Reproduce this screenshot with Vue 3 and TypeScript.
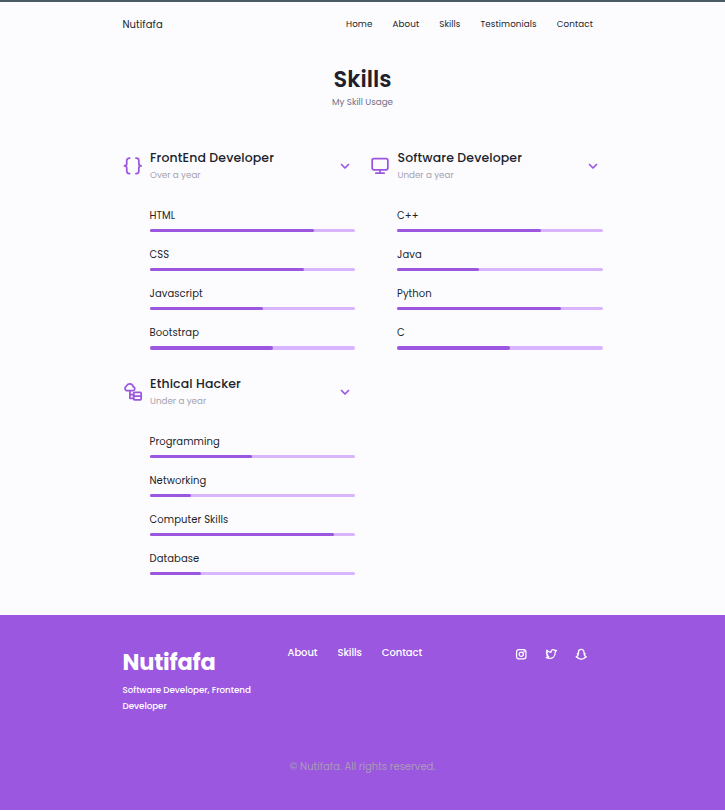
<script setup lang="ts">
interface Skill {
  name: string
  level: number
}
interface Group {
  title: string
  period: string
  icon: 'braces' | 'desktop' | 'database'
  skills: Skill[]
}

const nav = ['Home', 'About', 'Skills', 'Testimonials', 'Contact']
const footerNav = ['About', 'Skills', 'Contact']

const groups: Group[] = [
  {
    title: 'FrontEnd Developer',
    period: 'Over a year',
    icon: 'braces',
    skills: [
      { name: 'HTML', level: 80 },
      { name: 'CSS', level: 75 },
      { name: 'Javascript', level: 55 },
      { name: 'Bootstrap', level: 60 },
    ],
  },
  {
    title: 'Software Developer',
    period: 'Under a year',
    icon: 'desktop',
    skills: [
      { name: 'C++', level: 70 },
      { name: 'Java', level: 40 },
      { name: 'Python', level: 80 },
      { name: 'C', level: 55 },
    ],
  },
  {
    title: 'Ethical Hacker',
    period: 'Under a year',
    icon: 'database',
    skills: [
      { name: 'Programming', level: 50 },
      { name: 'Networking', level: 20 },
      { name: 'Computer Skills', level: 90 },
      { name: 'Database', level: 25 },
    ],
  },
]
</script>

<template>
  <div class="page">
    <header class="header">
      <a class="brand">Nutifafa</a>
      <nav class="nav">
        <a v-for="item in nav" :key="item">{{ item }}</a>
      </nav>
    </header>

    <main class="main">
      <h1 class="title">Skills</h1>
      <p class="subtitle">My Skill Usage</p>

      <div class="groups">
        <section v-for="g in groups" :key="g.title" class="group">
          <div class="group-head">
            <svg class="icon" viewBox="0 0 24 24">
              <template v-if="g.icon === 'braces'">
                <path d="M8 2.500H7.500a3 3 0 0 0-3 3v3.500a2.800 2.800 0 0 1-2.800 2.800a2.800 2.800 0 0 1 2.800 2.800V18a3 3 0 0 0 3 3h.5" />
                <path d="M15.500 2.500h.5a3 3 0 0 1 3 3v3.500a2.800 2.800 0 0 0 2.800 2.800a2.800 2.800 0 0 0-2.800 2.800V18a3 3 0 0 1-3 3h-.5" />
              </template>
              <template v-else-if="g.icon === 'desktop'">
                <rect x="2.600" y="3" width="18.800" height="13.500" rx="2" />
                <path d="M12 16.500v4M7 20.500h10" />
              </template>
              <template v-else>
                <path d="M4.200 10.400a2.900 2.900 0 0 1-.2-5.300a4.400 4.400 0 0 1 8.300.5a2.500 2.500 0 0 1 .1 4.800zM8.300 10.400V19.500h4.500M8.300 15h4.500" />
                <rect x="12.800" y="12.500" width="9" height="9" rx="1" />
                <path d="M12.800 17H21.800" />
              </template>
            </svg>
            <div class="group-text">
              <h2>{{ g.title }}</h2>
              <span>{{ g.period }}</span>
            </div>
            <svg class="arrow" viewBox="0 0 24 24">
              <path d="M7.800 10.200l4.200 4.200l4.200-4.200" />
            </svg>
          </div>
          <ul class="skills">
            <li v-for="s in g.skills" :key="s.name">
              <span class="name">{{ s.name }}</span>
              <div class="bar"><div class="fill" :style="{ width: s.level + '%' }"></div></div>
            </li>
          </ul>
        </section>
      </div>
    </main>

    <footer class="footer">
      <div class="footer-grid">
        <div>
          <h2 class="footer-title">Nutifafa</h2>
          <p class="footer-sub">Software Developer, Frontend<br />Developer</p>
        </div>
        <nav class="footer-nav">
          <a v-for="item in footerNav" :key="item">{{ item }}</a>
        </nav>
        <div class="socials">
          <svg viewBox="0 0 24 24">
            <rect x="3" y="3" width="18" height="18" rx="4.500" />
            <circle cx="12" cy="12" r="4.100" />
            <circle cx="17.300" cy="6.700" r=".5" />
          </svg>
          <svg viewBox="0 0 24 24">
            <path d="M22 4.500l-2.400 3.500C19.600 15.500 15 20 9 20c-2.700 0-5-.6-6.600-1.800c2 0 3.600-.5 4.600-1.500c-2-.6-3-1.700-3.400-3.200h1.700C3.500 12.200 2.700 10.700 2.800 8.800l1.700.5C2.900 7.600 2.800 5.600 3.600 4C6 6.500 8.500 7.900 11.500 8.200C11.300 5.200 13.200 3.300 15.500 3.300c1.200 0 2.200.4 3 1.200z" />
          </svg>
          <svg viewBox="0 0 24 24">
            <path d="M12 2.500c-3.200 0-5.300 2.200-5.300 5.200v3l-2.200.3l1.700 1.900c-.6 2-2 3.200-4 3.900c.7 1.500 2 1.400 3.500 1.700l.6 1.300c2-.4 3.200 1.700 5.700 1.700s3.700-2.100 5.700-1.700l.6-1.300c1.500-.3 2.800-.2 3.500-1.700c-2-.7-3.400-1.900-4-3.900l1.700-1.900l-2.200-.3v-3c0-3-2.100-5.200-5.300-5.200z" />
          </svg>
        </div>
      </div>
      <p class="copy">© Nutifafa. All rights reserved.</p>
    </footer>
  </div>
</template>

<style>
body {
  background: #fff;
}
</style>

<style scoped>
* {
  box-sizing: border-box;
  margin: 0;
  padding: 0;
}
.page {
  height: 810px;
  display: flex;
  flex-direction: column;
  background: #fcfcff;
  border-top: 2px solid #4b5c66;
  color: #211f2b;
  font-family: Poppins, "Open Sans", sans-serif;
}
.header {
  width: 480px;
  height: 44px;
  margin: 0 auto;
  display: flex;
  align-items: center;
  justify-content: space-between;
  padding-right: 9.500px;
}
.brand {
  font-size: 10px;
  letter-spacing: 0.080px;
  padding-top: 1px;
}
.nav {
  display: flex;
  gap: 20px;
  font-size: 8.750px;
  letter-spacing: 0.100px;
}
.main {
  width: 480px;
  height: 569px;
  margin: 0 auto;
  padding-top: 16px;
}
.title {
  height: 34px;
  line-height: 34px;
  font-size: 22.500px;
  font-weight: 600;
  text-align: center;
}
.subtitle {
  height: 14px;
  line-height: 12px;
  font-size: 8.750px;
  text-align: center;
  color: #736e85;
}
.groups {
  display: grid;
  grid-template-columns: 232.500px 232.500px;
  column-gap: 15px;
  padding-top: 39px;
}
.group {
  height: 226px;
}
.group-head {
  height: 34px;
  display: flex;
  align-items: center;
}
.icon,
.arrow {
  width: 20px;
  height: 20px;
  flex: none;
  fill: none;
  stroke: #9b57df;
  stroke-width: 2.100;
  stroke-linecap: round;
  stroke-linejoin: round;
}
.group-text {
  flex: 1;
  padding-left: 7.500px;
}
.group-text h2 {
  height: 18px;
  line-height: 18px;
  font-size: 12.500px;
  font-weight: 500;
  letter-spacing: 0.110px;
}
.group-text span {
  display: block;
  height: 16px;
  line-height: 16px;
  font-size: 8.750px;
  color: #a4a1ae;
}
.skills {
  list-style: none;
  padding: 24px 0 0 27px;
}
.skills li {
  height: 39px;
}
.name {
  display: block;
  height: 22px;
  line-height: 16px;
  padding-top: 1px;
  font-size: 10px;
  letter-spacing: 0.090px;
}
.bar {
  height: 3px;
  border-radius: 2px;
  background: #d8b5fc;
}
.group:not(:last-child) li:last-child .bar {
  height: 4px;
}
.fill {
  height: 100%;
  border-radius: 2px;
  background: #9b57df;
}
.footer {
  height: 195px;
  background: #9b57df;
  color: #fff;
}
.footer-grid {
  width: 480px;
  height: 142px;
  margin: 0 auto;
  padding-top: 30px;
  display: grid;
  grid-template-columns: 150px 150px 150px;
  column-gap: 15px;
}
.footer-title {
  height: 37px;
  line-height: 34px;
  font-size: 22.500px;
  font-weight: 700;
  letter-spacing: -0.200px;
}
.footer-sub {
  font-size: 8.750px;
  line-height: 16px;
  font-weight: 500;
  letter-spacing: -0.040px;
  white-space: nowrap;
}
.footer-nav {
  display: flex;
  gap: 20px;
  height: 16px;
  line-height: 16px;
  font-size: 10px;
  font-weight: 500;
  letter-spacing: -0.080px;
}
.socials {
  display: flex;
  gap: 17.800px;
  padding: 2.500px 0 0 62.250px;
}
.socials svg {
  width: 12.500px;
  height: 12.500px;
  fill: none;
  stroke: #fff;
  stroke-width: 2.400;
  stroke-linejoin: round;
}
.copy {
  height: 20px;
  line-height: 20px;
  text-align: center;
  font-size: 10px;
  color: #a99bb8;
}
</style>
